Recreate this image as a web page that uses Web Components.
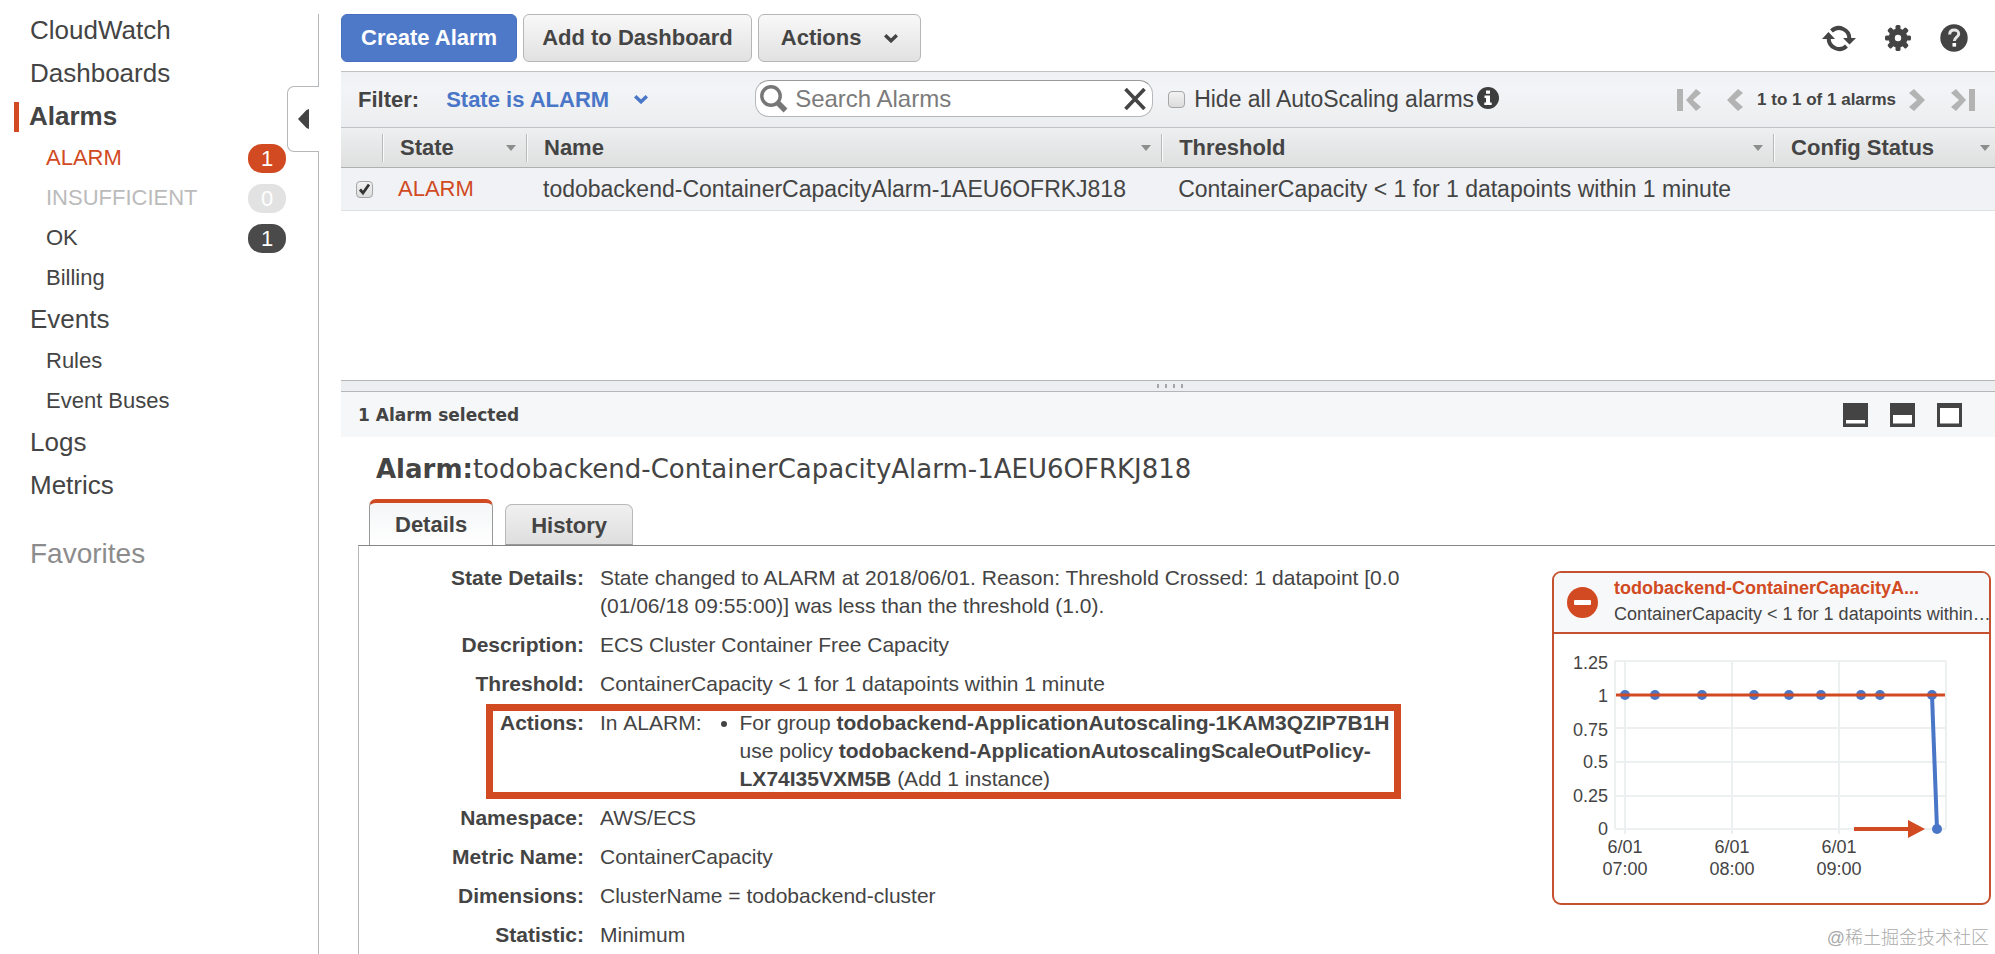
<!DOCTYPE html>
<html lang="en">
<head>
<meta charset="utf-8">
<title>CloudWatch Alarms</title>
<style>
  :root {
    --text: #444;
    --red: #d14a22;
    --blue: #4a76c8;
    --line: #b5b8ba;
    --font-ui: "Liberation Sans", Arial, sans-serif;
    --font-wide: "DejaVu Sans", Verdana, sans-serif;
  }
  body { margin: 0; background: #fff; color: var(--text); font-family: var(--font-ui); }
</style>
</head>
<body>
<cw-app></cw-app>

<script>
const ICONS = {
  refresh: [34, 28, `<g fill="none" stroke="#444" stroke-width="4"><path d="M9.500 7A10.500 10.500 0 0 1 27.300 15"/><path d="M24.500 22A10.500 10.500 0 0 1 6.700 14"/></g><path fill="#444" d="M21 14H34L27.500 20.500ZM0 15H13L6.500 8Z"/>`],
  gear: [26, 26, `<g fill="#444"><circle cx="13" cy="13" r="9.500"/><rect x="10.500" y="0" width="5" height="26" rx="1.500"/><rect x="10.500" y="0" width="5" height="26" rx="1.500" transform="rotate(45 13 13)"/><rect x="10.500" y="0" width="5" height="26" rx="1.500" transform="rotate(90 13 13)"/><rect x="10.500" y="0" width="5" height="26" rx="1.500" transform="rotate(135 13 13)"/></g><circle cx="13" cy="13" r="3.200" fill="#fff"/>`],
  help: [28, 28, `<circle cx="14" cy="14" r="13.700" fill="#444"/><path d="M9.600 10.500C9.800 7.400 11.700 6 14.200 6C16.800 6 18.700 7.500 18.700 9.900C18.700 13 14.300 13.200 14.300 17" fill="none" stroke="#e6e6e6" stroke-width="3"/><rect x="12.500" y="19" width="3.600" height="3.600" fill="#fff"/>`],
  info: [22, 22, `<circle cx="11" cy="11" r="11" fill="#3d3d3d"/><path fill="#fff" d="M9 3.500H13V6.700H9ZM7.500 8.500H13V15.500H14.700V18H7.300V15.500H9V11H7.500Z"/>`],
  search: [30, 30, `<circle cx="12" cy="12" r="9.200" fill="none" stroke="#777" stroke-width="3.400"/><path d="M18.500 18.500L26.500 26.500" stroke="#777" stroke-width="5.500"/>`],
  clear: [22, 22, `<path d="M1.500 1L20.500 21M20.500 1L1.500 21" stroke="#444" stroke-width="3.600"/>`],
  chevron: [14, 9, `<path d="M1.200 1.200L7 6.800L12.800 1.200" fill="none" stroke="currentColor" stroke-width="3.400"/>`],
  sort: [10, 6, `<path d="M0 0H10L5 6Z" fill="#8d8d8d"/>`],
  first: [24, 22, `<path d="M0 0H6V22H0ZM19 0L24 4L16 11L24 18L19 22L9 11Z" fill="#b3b3b3"/>`],
  prev: [16, 22, `<path d="M11 0L16 4L8 11L16 18L11 22L0 11Z" fill="#b3b3b3"/>`],
  next: [16, 22, `<path d="M5 0L0 4L8 11L0 18L5 22L16 11Z" fill="#b3b3b3"/>`],
  last: [24, 22, `<path d="M24 0H18V22H24ZM5 0L0 4L8 11L0 18L5 22L15 11Z" fill="#b3b3b3"/>`],
  collapse: [11, 20, `<path d="M11 0V20L8.500 19L0 10L8.500 1Z" fill="#444"/>`],
  paneMin: [25, 24, `<path fill="#444" d="M0 0H25V24H0Z"/><path fill="#fff" d="M3 17H22V20.500H3Z"/>`],
  paneHalf: [25, 24, `<path fill="#444" d="M0 0H25V24H0Z"/><path fill="#fff" d="M3 12H22V20.500H3Z"/>`],
  paneMax: [25, 24, `<path fill="#444" d="M0 0H25V24H0Z"/><path fill="#fff" d="M3 5H22V20.500H3Z"/>`],
  stop: [31, 31, `<circle cx="15.500" cy="15.500" r="15.500" fill="#d14a22"/><rect x="7" y="13" width="17" height="5" rx="1" fill="#fff"/>`],
  grip: [30, 6, `<g fill="#a2a4a6"><rect x="1" y="1" width="2" height="4"/><rect x="9" y="1" width="2" height="4"/><rect x="17" y="1" width="2" height="4"/><rect x="25" y="1" width="2" height="4"/></g>`]
};

function define(name, html) {
  const template = document.createElement("template");
  template.innerHTML = html;
  customElements.define(name, class extends HTMLElement {
    constructor() {
      super();
      this.attachShadow({ mode: "open" }).append(template.content.cloneNode(true));
    }
  });
}

customElements.define("cw-icon", class extends HTMLElement {
  connectedCallback() {
    if (this.shadowRoot) return;
    const [w, h, body] = ICONS[this.getAttribute("name")];
    this.attachShadow({ mode: "open" }).innerHTML =
      `<style>:host{display:block;flex:none}svg{display:block}</style>
       <svg width="${w}" height="${h}" viewBox="0 0 ${w} ${h}" aria-hidden="true">${body}</svg>`;
  }
});

const BARE = `button{font:inherit;color:inherit;background:none;border:0;padding:0;cursor:pointer}`;

define("cw-nav-item", `
<style>
  :host { display: flex; align-items: center; height: 43px; padding-left: 30px; font-size: 26px; }
  :host([sub]) { height: 40px; padding-left: 46px; font-size: 22px; }
  :host([tone="alarm"]) { color: var(--red); }
  :host([tone="muted"]) { color: #bbb; }
  :host([current]) { padding-left: 14px; font-weight: bold; }
  a { flex: 1; color: inherit; text-decoration: none; }
  .mark { display: none; }
  :host([current]) .mark { display: block; width: 5px; height: 30px; margin-right: 10px; background: var(--red); }
</style>
<span class="mark"></span><a href="#"><slot></slot></a><slot name="badge"></slot>`);

define("cw-badge", `
<style>
  :host { display: block; width: 38px; height: 29px; line-height: 29px; margin-right: 1px;
    border-radius: 14px; text-align: center; color: #fff; font-size: 22px; background: #4a4a4a; }
  :host([tone="alarm"]) { background: var(--red); }
  :host([tone="muted"]) { background: #e2e2e2; }
</style><slot></slot>`);

define("cw-sidebar", `
<style>
  :host { display: flex; flex: none; width: 319px; }
  nav { flex: 1; padding-top: 9px; }
  .fav { padding: 25px 0 0 30px; font-size: 28px; line-height: 43px; color: #8c8c8c; }
  .rail { display: flex; flex-direction: column; width: 32px; margin-top: 14px; }
  .line { flex: 1; border-right: 1px solid var(--line); }
  .line.top { flex: 0 0 72px; }
  ${BARE}
  button { height: 66px; border: 1px solid var(--line); border-right: 0; border-radius: 7px 0 0 7px; padding-left: 10px; }
</style>
<nav aria-label="CloudWatch">
  <cw-nav-item>CloudWatch</cw-nav-item>
  <cw-nav-item>Dashboards</cw-nav-item>
  <cw-nav-item current>Alarms</cw-nav-item>
  <cw-nav-item sub tone="alarm">ALARM<cw-badge slot="badge" tone="alarm">1</cw-badge></cw-nav-item>
  <cw-nav-item sub tone="muted">INSUFFICIENT<cw-badge slot="badge" tone="muted">0</cw-badge></cw-nav-item>
  <cw-nav-item sub>OK<cw-badge slot="badge">1</cw-badge></cw-nav-item>
  <cw-nav-item sub>Billing</cw-nav-item>
  <cw-nav-item>Events</cw-nav-item>
  <cw-nav-item sub>Rules</cw-nav-item>
  <cw-nav-item sub>Event Buses</cw-nav-item>
  <cw-nav-item>Logs</cw-nav-item>
  <cw-nav-item>Metrics</cw-nav-item>
  <div class="fav">Favorites</div>
</nav>
<div class="rail">
  <div class="line top"></div>
  <button aria-label="Collapse navigation"><cw-icon name="collapse"></cw-icon></button>
  <div class="line"></div>
</div>`);

define("cw-toolbar", `
<style>
  :host { display: flex; justify-content: space-between; height: 57px; padding-right: 27px; font-size: 22px; }
  div { display: flex; align-items: center; height: 48px; }
  .actions { gap: 6px; font-weight: bold; }
  .tools { gap: 29px; }
  ${BARE}
  .actions button { display: flex; align-items: center; gap: 22px; height: 48px; padding: 0 18px;
    border: 1px solid #b6b6b6; border-radius: 6px; background: linear-gradient(#f8f8f8, #e1e1e1); }
  .actions .primary { padding: 0 19px; border-color: #4771c0; background: #4e78c8; color: #fff; }
  .actions .menu { padding: 0 22px; }
</style>
<div class="actions">
  <button class="primary">Create Alarm</button>
  <button>Add to Dashboard</button>
  <button class="menu" aria-haspopup="menu">Actions<cw-icon name="chevron"></cw-icon></button>
</div>
<div class="tools">
  <button aria-label="Refresh"><cw-icon name="refresh"></cw-icon></button>
  <button aria-label="Settings"><cw-icon name="gear"></cw-icon></button>
  <button aria-label="Help"><cw-icon name="help"></cw-icon></button>
</div>`);

const CHECK = `
  input[type=checkbox] { appearance: none; box-sizing: border-box; display: block; flex: none; width: 17px; height: 17px; margin: 0;
    border: 1px solid #a6a6a6; border-radius: 4px; background: linear-gradient(#f2f2f2, #dcdcdc); }
  input[type=checkbox]:checked { background: url("data:image/svg+xml,%3Csvg xmlns='http://www.w3.org/2000/svg' viewBox='0 0 15 15'%3E%3Cpath d='M3 7.500L6 11L12 2.500' fill='none' stroke='%23333' stroke-width='2.800'/%3E%3C/svg%3E") center/15px no-repeat, linear-gradient(#f2f2f2, #dcdcdc); }`;

define("cw-filter-bar", `
<style>
  :host { display: flex; align-items: center; height: 55px; padding: 0 20px 0 17px; font-size: 22px;
    border: solid #bfc2c4; border-width: 1px 0; background: linear-gradient(#eef1f2, #f2f4f7 30%, #ebedee); }
  ${BARE} ${CHECK}
  .state { display: flex; align-items: center; gap: 24px; margin: 0 107px 0 27px; color: var(--blue); }
  label, select { font-weight: bold; }
  select { appearance: none; font-family: inherit; font-size: 22px; color: inherit; background: none; border: 0; padding: 0; }
  .search { display: flex; align-items: center; box-sizing: border-box; width: 398px; height: 37px; padding: 0 6px 0 3px;
    margin-bottom: 2px; border: 1px solid var(--line); border-top-color: #999; border-radius: 14px; background: #fff; }
  .search input { flex: 1; min-width: 0; height: 33px; padding: 0; margin-left: 6px; border: 0; background: none; font: 24px var(--font-ui); color: var(--text); outline: 0; }
  .search input::placeholder { color: #7b7b7b; opacity: 1; }
  .hide { display: flex; align-items: center; gap: 9px; margin: 0 3px 0 15px; font-size: 23px; font-weight: normal; white-space: nowrap; }
  .info { margin-bottom: 4px; }
  .pager { display: flex; align-items: center; margin-left: auto; font-size: 17px; font-weight: bold; white-space: nowrap; }
  .pager span { margin: 0 13px 0 14px; }
  .far { margin: 0 26px 0 0; }
  .far.end { margin: 0 0 0 26px; }
</style>
<label for="state">Filter:</label>
<span class="state"><select id="state"><option>State is ALARM</option></select><cw-icon name="chevron"></cw-icon></span>
<div class="search" role="search">
  <cw-icon name="search"></cw-icon>
  <input type="text" placeholder="Search Alarms" aria-label="Search Alarms">
  <button aria-label="Clear search"><cw-icon name="clear"></cw-icon></button>
</div>
<label class="hide"><input type="checkbox">Hide all AutoScaling alarms</label>
<cw-icon class="info" name="info"></cw-icon>
<div class="pager">
  <button class="far" aria-label="First page"><cw-icon name="first"></cw-icon></button>
  <button aria-label="Previous page"><cw-icon name="prev"></cw-icon></button>
  <span>1 to 1 of 1 alarms</span>
  <button aria-label="Next page"><cw-icon name="next"></cw-icon></button>
  <button class="far end" aria-label="Last page"><cw-icon name="last"></cw-icon></button>
</div>`);

define("cw-alarm-table", `
<style>
  :host { display: block; min-height: 252px; }
  ${CHECK}
  table { width: 100%; table-layout: fixed; border-collapse: separate; border-spacing: 0; }
  .pick { width: 41px; } .st { width: 144px; } .name { width: 38.4%; } .thr { width: 37%; }
  th, td { padding: 0; text-align: left; white-space: nowrap; }
  th { height: 39px; font-size: 22px; border-bottom: 1px solid #aeb1b3; background: linear-gradient(#edeff0, #dfdfdf); }
  .head { display: flex; align-items: center; justify-content: space-between; height: 28px; padding: 0 10px 0 17px; border-left: 1px solid #b9b9b9; box-shadow: inset 1px 0 #fafafa; }
  th:last-child .head { padding-right: 5px; }
  td { height: 42px; padding-left: 17px; font-size: 23px; background: #f0f2f5; border-bottom: 1px solid #dde0e3; }
  td:first-child { padding-left: 15px; }
  .alarm { padding-left: 16px; color: var(--red); font-size: 22px; }
</style>
<table>
  <colgroup><col class="pick"><col class="st"><col class="name"><col class="thr"><col></colgroup>
  <thead><tr>
    <th aria-label="Select"></th>
    <th><div class="head">State<cw-icon name="sort"></cw-icon></div></th>
    <th><div class="head">Name<cw-icon name="sort"></cw-icon></div></th>
    <th><div class="head">Threshold<cw-icon name="sort"></cw-icon></div></th>
    <th><div class="head">Config Status<cw-icon name="sort"></cw-icon></div></th>
  </tr></thead>
  <tbody><tr>
    <td><input type="checkbox" checked aria-label="Select alarm"></td>
    <td class="alarm">ALARM</td>
    <td>todobackend-ContainerCapacityAlarm-1AEU6OFRKJ818</td>
    <td>ContainerCapacity &lt; 1 for 1 datapoints within 1 minute</td>
    <td></td>
  </tr></tbody>
</table>`);

define("cw-splitter", `
<style>
  :host { display: flex; align-items: center; justify-content: center; height: 10px; padding-left: 6px; border: solid #b4b7b9; border-width: 1px 0; background: #eceeef; }
</style><cw-icon name="grip"></cw-icon>`);

define("cw-selection-bar", `
<style>
  :host { display: flex; align-items: center; justify-content: space-between; height: 45px; padding: 0 33px 0 17px; background: #f5f7f9; font: bold 17px var(--font-wide); }
  div { display: flex; gap: 22px; }
  ${BARE}
</style>
<slot></slot>
<div>
  <button aria-label="Minimise pane"><cw-icon name="paneMin"></cw-icon></button>
  <button aria-label="Half pane"><cw-icon name="paneHalf"></cw-icon></button>
  <button aria-label="Maximise pane"><cw-icon name="paneMax"></cw-icon></button>
</div>`);

const px = [71, 101, 148, 200, 235, 267, 307, 326, 378];
const yLabels = [["1.25", 29], ["1", 62], ["0.75", 96], ["0.5", 128], ["0.25", 162], ["0", 195]];
define("cw-metric-card", `
<style>
  :host { display: block; flex: none; box-sizing: border-box; width: 439px; border: 2px solid #c4512f; border-radius: 9px; overflow: hidden; }
  header { display: flex; align-items: center; gap: 16px; height: 59px; padding-left: 13px; border-bottom: 2px solid #c4512f; background: #f7f8f9; font-size: 18px; line-height: 26px; white-space: nowrap; }
  .text { padding-bottom: 4px; }
  .title { font-weight: bold; color: var(--red); }
  svg { display: block; font-size: 18px; fill: var(--text); }
</style>
<header><cw-icon name="stop"></cw-icon>
  <div class="text"><div class="title">todobackend-ContainerCapacityA...</div><div>ContainerCapacity &lt; 1 for 1 datapoints within…</div></div>
</header>
<svg width="435" height="269" viewBox="0 0 435 269" role="img" aria-label="ContainerCapacity over time">
  <g stroke="#edf0f0" stroke-width="2" fill="none">
    <path d="M61 27H392M61 94H392M61 128H392M61 162H392M61 195H392M61 27V195M71 27V200M178 27V200M285 27V200M392 27V195"/>
  </g>
  <g text-anchor="end">${yLabels.map(([t, y]) => `<text x="54" y="${y + 6}">${t}</text>`).join("")}</g>
  <g text-anchor="middle">${[["07:00", 71], ["08:00", 178], ["09:00", 285]].map(([t, x]) => `<text x="${x}" y="219">6/01</text><text x="${x}" y="241">${t}</text>`).join("")}</g>
  <path d="M378 61L383 195" stroke="#4a76c8" stroke-width="4"/>
  <g fill="#4a76c8">${px.map(x => `<circle cx="${x}" cy="61" r="5"/>`).join("")}<circle cx="383" cy="195" r="5"/></g>
  <path d="M62 61H391" stroke="#d14a22" stroke-width="3"/>
  <path d="M300 195H355" stroke="#d14a22" stroke-width="4"/><path d="M354 186L371 195L354 204Z" fill="#d14a22"/>
</svg>`);

define("cw-alarm-details", `
<style>
  :host { display: flex; flex-direction: column; flex: 1; }
  ${BARE}
  h1 { margin: 0; padding: 16px 35px 14px; font: 26px/32px var(--font-wide); }
  .tabs { display: flex; align-items: flex-end; gap: 12px; height: 46px; padding-left: 28px; }
  .tabs button { height: 41px; padding: 2px 25px 0; border: 1px solid #b9b9b9; border-bottom-color: #999; border-radius: 7px 7px 0 0; background: linear-gradient(#f0f0f0, #dedede); font-size: 22px; font-weight: bold; }
  .tabs button[aria-selected=true] { height: 46px; border-color: #999; border-top: 4px solid var(--red); border-bottom: 0; background: linear-gradient(#f4f6f7, #fff); }
  .panel { display: flex; align-items: flex-start; justify-content: space-between; flex: 1; margin-left: 17px; padding-right: 4px; border: solid #858585; border-width: 1px 0 0 1px; border-left-color: var(--line); }
  dl { display: flex; flex-direction: column; gap: 11px; flex: 1; max-width: 1048px; margin: 0; padding-top: 18px; font-size: 21px; line-height: 28px; }
  dl > div { display: grid; grid-template-columns: 225px 1fr; gap: 16px; position: relative; }
  dt { font-weight: bold; text-align: right; }
  dd { margin: 0; }
  .in { display: flex; }
  ul { margin: 0; padding-left: 38px; }
  .boxed::after { content: ""; position: absolute; inset: -5px 6px -6px 127px; border: 7px solid var(--red); }
  cw-metric-card { margin-top: 25px; }
</style>
<h1><b>Alarm:</b>todobackend-ContainerCapacityAlarm-1AEU6OFRKJ818</h1>
<div class="tabs" role="tablist">
  <button role="tab" aria-selected="true">Details</button>
  <button role="tab" aria-selected="false">History</button>
</div>
<div class="panel" role="tabpanel">
  <dl>
    <div><dt>State Details:</dt><dd>State changed to ALARM at 2018/06/01. Reason: Threshold Crossed: 1 datapoint [0.0 (01/06/18 09:55:00)] was less than the threshold (1.0).</dd></div>
    <div><dt>Description:</dt><dd>ECS Cluster Container Free Capacity</dd></div>
    <div><dt>Threshold:</dt><dd>ContainerCapacity &lt; 1 for 1 datapoints within 1 minute</dd></div>
    <div class="boxed"><dt>Actions:</dt><dd class="in"><span>In&nbsp;ALARM:</span><ul><li>For group <b>todobackend-ApplicationAutoscaling-1KAM3QZIP7B1H</b> use policy <b>todobackend-ApplicationAutoscalingScaleOutPolicy-</b><wbr><b>LX74I35VXM5B</b> (Add 1 instance)</li></ul></dd></div>
    <div><dt>Namespace:</dt><dd>AWS/ECS</dd></div>
    <div><dt>Metric Name:</dt><dd>ContainerCapacity</dd></div>
    <div><dt>Dimensions:</dt><dd>ClusterName = todobackend-cluster</dd></div>
    <div><dt>Statistic:</dt><dd>Minimum</dd></div>
  </dl>
  <cw-metric-card></cw-metric-card>
</div>`);

define("cw-watermark", `
<style>
  :host { position: absolute; right: 6px; bottom: 4px; font: 300 18px/24px "Liberation Sans", "Noto Sans CJK SC", sans-serif; color: #aaa; }
</style><slot></slot>`);

define("cw-app", `
<style>
  :host { display: flex; gap: 22px; min-height: 100vh; position: relative; }
  main { display: flex; flex-direction: column; flex: 1; min-width: 0; padding-top: 14px; }
</style>
<cw-sidebar></cw-sidebar>
<main>
  <cw-toolbar></cw-toolbar>
  <cw-filter-bar></cw-filter-bar>
  <cw-alarm-table></cw-alarm-table>
  <cw-splitter></cw-splitter>
  <cw-selection-bar>1 Alarm selected</cw-selection-bar>
  <cw-alarm-details></cw-alarm-details>
</main>
<cw-watermark>@稀土掘金技术社区</cw-watermark>`);
</script>
</body>
</html>
